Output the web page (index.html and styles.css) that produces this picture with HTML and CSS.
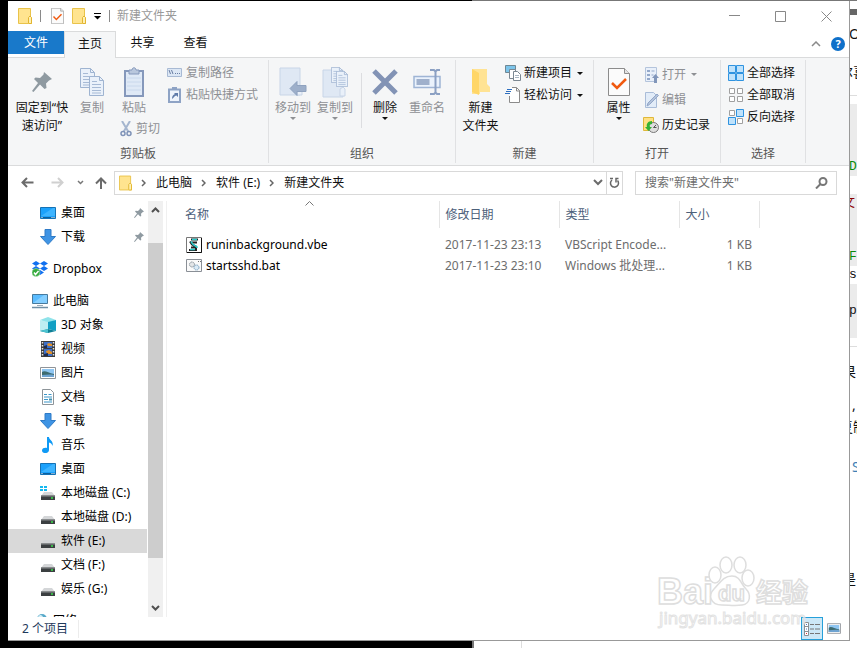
FILE: index.html
```html
<!DOCTYPE html>
<html lang="zh-CN">
<head>
  <meta charset="UTF-8" />
  <meta name="viewport" content="width=device-width, initial-scale=1.0"/>
  <title>新建文件夹</title>
  <link rel="stylesheet" href="styles.css">
</head>
<body>

  <!-- icons used more than once -->
  <svg class="sprite" aria-hidden="true">
    <symbol id="i-folder" viewBox="0 0 14 16">
      <path d="M.5.5h12v8l1 1v6h-13z" fill="#ffe48f" stroke="#e9c34a"/>
      <path d="M10.500 15V9.500l1.500-1.500 1.500 1.500V15.500h-2.500z" fill="#fff0b3" stroke="#e2b530"/>
    </symbol>
    <symbol id="i-check" viewBox="0 0 22 28">
      <path d="M.5.5h16l5 5v22H.500z" fill="#fbfbfb" stroke="#8c8c8c"/>
      <path d="M16.500.5v5h5" fill="#e4e4e4" stroke="#8c8c8c"/>
      <path d="M4 15l5 5 9-9" fill="none" stroke="#f0590f" stroke-width="2.500"/>
    </symbol>
    <symbol id="i-pin" viewBox="0 0 20 20">
      <path d="M12 0l8 7-3 1.500-3 3 .5 4.500-2 1-4.500-4.500L1.500 20 0 19l6-8L2 7l1.500-1.500 4.500.5 3.500-3.500z" fill="#8f9aa1"/>
    </symbol>
    <symbol id="i-page" viewBox="0 0 15 20">
      <path d="M.5.5h10l4 4v15H.500z" fill="#eaf1fa" stroke="#9fb4d1"/>
      <path d="M10.500.5v4h4" fill="none" stroke="#9fb4d1"/>
      <path d="M3 5.500h5M3 8.500h9M3 11.500h9M3 14.500h9M3 17h9" stroke="#a7bad5"/>
    </symbol>
    <symbol id="i-desktop" viewBox="0 0 16 12">
      <path d="M.5.5h15v11H.500z" fill="#1ba1fb" stroke="#1572b5"/>
      <path d="M1 9L13 1h2v8z" fill="#3db4ff"/>
      <path d="M1 10.500h14" stroke="#0b5f9c"/>
      <path d="M1.500 10.500h1m9 0h1m1 0h1" stroke="#fff"/>
    </symbol>
    <symbol id="i-download" viewBox="0 0 16 16">
      <path d="M5 .5h6v7h4.500L8 15.500.5 7.500H5z" fill="#3f94e4" stroke="#2f7bc7"/>
    </symbol>
    <symbol id="i-drive" viewBox="0 0 16 16">
      <path d="M4 7h8l3 4H1z" fill="#d4d6d8"/>
      <path d="M1 10.500h14V15H1z" fill="#3b3f41"/>
      <path d="M1 11h14" stroke="#8b8f91"/>
      <path d="M11 13h2" stroke="#38e04a" stroke-width="1.500"/>
    </symbol>
    <symbol id="i-picture" viewBox="0 0 16 12">
      <path d="M.5.5h15v11H.500z" fill="#fff" stroke="#8f9499"/>
      <path d="M2 2h12v8H2z" fill="#8fc6f2"/>
      <path d="M2 5c3-2 6 1 12 2v3H2z" fill="#3d6b70"/>
      <path d="M2 8c4 0 8-1 12 0v2H2z" fill="#6ea3d1"/>
    </symbol>
    <symbol id="i-down" viewBox="0 0 6 3"><path d="M0 0h6L3 3z" fill="currentColor"/></symbol>
    <symbol id="i-next" viewBox="0 0 5 8"><path d="M1 1l3 3-3 3" fill="none" stroke="#666" stroke-width="1.500"/></symbol>
  </svg>

  <div class="desktop">

    <!-- page open behind the explorer -->
    <div class="behind">
      <div class="behind-tab"></div>
      <div class="behind-text" aria-hidden="true">
        <div class="bar"></div>
        <p class="intro">O</p>
        <p class="title cut">尔喜</p>
        <hr>
        <div class="code">
          <p></p><p></p><p></p>
          <p class="green">D</p>
          <p class="white"></p>
          <p class="red cut">文</p>
          <p></p><p></p>
          <p class="green">F</p>
          <p class="white">s</p>
          <p></p>
          <p>p</p>
          <p></p>
        </div>
        <hr>
        <p class="result cut">果</p>
        <p class="comma">,</p>
        <p class="copy cut">复制</p>
        <p class="link">S</p>
        <p class="last cut">是</p>
      </div>
    </div>

    <div class="explorer">
      <header class="titlebar">
        <div class="quick">
          <svg class="folder"><use href="#i-folder"/></svg>
          <span class="sep"></span>
          <button class="props" aria-label="属性"><svg class="mini-check"><use href="#i-check"/></svg></button>
          <button aria-label="新建文件夹"><svg class="folder"><use href="#i-folder"/></svg></button>
          <button class="more" aria-label="自定义快速访问工具栏"><svg width="7" height="7" viewBox="0 0 7 7"><path d="M0 .5h7" stroke="#000"/><path d="M0 3h7L3.500 6.500z"/></svg></button>
          <span class="sep"></span>
        </div>
        <h1>新建文件夹</h1>
        <div class="controls">
          <button aria-label="最小化"><svg width="11" height="11"><path d="M0 4.500h11" stroke="#888"/></svg></button>
          <button aria-label="最大化"><svg width="11" height="11"><path d="M.5.5h10v10H.500z" fill="none" stroke="#888"/></svg></button>
          <button aria-label="关闭"><svg width="11" height="11"><path d="M.5.5l10 10M10.500.5l-10 10" stroke="#888"/></svg></button>
        </div>
      </header>

      <nav class="tabs">
        <button class="file">文件</button>
        <button class="active">主页</button>
        <button>共享</button>
        <button>查看</button>
        <div class="tab-tools">
          <button aria-label="折叠功能区"><svg width="10" height="6"><path d="M1 5l4-4 4 4" fill="none" stroke="#8a8a8a" stroke-width="1.500"/></svg></button>
          <button class="help" aria-label="帮助">?</button>
        </div>
      </nav>

      <div class="ribbon">
        <section class="group clipboard">
          <div class="tools">
            <button class="big wide">
              <span class="pic"><svg width="20" height="20"><use href="#i-pin"/></svg></span>
              固定到“快<br>速访问”
            </button>
            <button class="big narrow" disabled>
              <span class="pic"><svg width="25" height="29" viewBox="0 0 25 29"><use href="#i-page" width="15" height="20"/><use href="#i-page" x="9" y="8" width="15" height="20"/></svg></span>
              复制
            </button>
            <div class="paste">
              <button class="big" disabled>
                <span class="pic"><svg width="20" height="30" viewBox="0 0 20 30"><path d="M1 4h18v25H1z" fill="#dfe9f6" stroke="#8598bb" stroke-width="2"/><path d="M5 7V3h3c0-3 4-3 4 0h3v4z" fill="#b9c7dd" stroke="#8598bb"/><path d="M3 11h14M3 15h14M3 19h14M3 23h14" stroke="#c9d8ec"/></svg></span>
                粘贴
              </button>
              <button class="small" disabled>
                <svg width="12" height="16" viewBox="0 0 12 16"><path d="M2 0l6.500 11M10 0L3.500 11" stroke="#a5b6cf" stroke-width="2"/><circle cx="3" cy="12.500" r="2" fill="none" stroke="#7f93b8" stroke-width="1.500"/><circle cx="9" cy="12.500" r="2" fill="none" stroke="#7f93b8" stroke-width="1.500"/></svg>
                剪切
              </button>
            </div>
            <div class="stack">
              <button class="small" disabled>
                <svg width="15" height="10" viewBox="0 0 15 10"><path d="M.5.5h14v8H.500z" fill="#dce7f5" stroke="#a8bad4"/><path d="M2 2l1.500 4M4.500 2L6 6M8 5.500h1m1 0h1m1 0h1" stroke="#6a7ea3"/></svg>
                复制路径
              </button>
              <button class="small" disabled>
                <svg width="15" height="16" viewBox="0 0 15 16"><path d="M2 2.500h11v12.500H2z" fill="#eef4fc" stroke="#8ea3c5" stroke-width="2"/><path d="M5 3V0h5v3z" fill="#8ea3c5"/><path d="M5 12c0-3 1-4 3-5L7 6h4v4L9.500 8.500C7 9 7 11 5 12z" fill="#5f7ba9"/></svg>
                粘贴快捷方式
              </button>
            </div>
          </div>
          <h2>剪贴板</h2>
        </section>

        <section class="group organize">
          <div class="tools">
            <button class="big" disabled>
              <span class="pic"><svg width="28" height="30" viewBox="0 0 28 30"><path d="M1 1h20v27H1z" fill="#dfe8f4" stroke="#c8d5e7"/><path d="M18 20v8h5v-8l-2-2z" fill="#e9f0f9" stroke="#c8d5e7"/><path d="M11 21.500l7-7v4h9v6h-9v4z" fill="#9dafca" stroke="#8fa2bf"/></svg></span>
              移动到
              <svg class="down"><use href="#i-down"/></svg>
            </button>
            <button class="big" disabled>
              <span class="pic"><svg width="28" height="31" viewBox="0 0 28 31"><path d="M2 3h20v27H2z" fill="#dfe8f4" stroke="#c8d5e7"/><path d="M19 22v7h5v-7l-2-2z" fill="#e9f0f9" stroke="#c8d5e7"/><use href="#i-page" x="10" y="0" width="12" height="16"/><use href="#i-page" x="15" y="4" width="12" height="16"/></svg></span>
              复制到
              <svg class="down"><use href="#i-down"/></svg>
            </button>
            <span class="rule"></span>
            <button class="big">
              <span class="pic"><svg width="26" height="26" viewBox="0 0 26 26"><path d="M2 2l22 22M24 2L2 24" stroke="#8293b5" stroke-width="5"/></svg></span>
              删除
              <svg class="down"><use href="#i-down"/></svg>
            </button>
            <button class="big" disabled>
              <span class="pic"><svg width="28" height="28" viewBox="0 0 28 28"><path d="M1 8.500h26v11H1z" fill="#eaf2fc" stroke="#9fb5d5" stroke-width="1.500"/><path d="M3.500 11h13v6h-13z" fill="#9fb0cc"/><path d="M17 2h4l1.500 1.500L24 2h3M22.500 3v22M17 26h4l1.500-1.500L24 26h3" fill="none" stroke="#8ba0c3" stroke-width="2"/></svg></span>
              重命名
            </button>
          </div>
          <h2>组织</h2>
        </section>

        <section class="group create">
          <div class="tools">
            <button class="big">
              <span class="pic"><svg width="20" height="28" viewBox="0 0 20 28"><path d="M1 1h15v15l3 3v5H9v2H1z" fill="#ffe394"/><path d="M1 1l7 4v22l-7-3z" fill="#ffd667"/></svg></span>
              新建<br>文件夹
            </button>
            <div class="stack">
              <button class="small">
                <svg width="16" height="16" viewBox="0 0 16 16"><path d="M.5.5h10v7H.500z" fill="#7cc4ea" stroke="#6e8794"/><path d="M4.500 4.500h6v9h-6z" fill="#fff" stroke="#7b8791"/><path d="M8.500 6.500h4l3 3v6h-7z" fill="#fff" stroke="#7b8791"/><path d="M10 10.500h4M10 12.500h4" stroke="#aab7c2"/></svg>
                新建项目
                <svg class="down"><use href="#i-down"/></svg>
              </button>
              <button class="small">
                <svg width="16" height="16" viewBox="0 0 16 16"><path d="M4.500.5h7l3 3v12h-10z" fill="#fff"/><path d="M7 .5h4.500l3 3v12h-10V9M11.500.5v3.500H15" fill="none" stroke="#8b8b8b"/><path d="M2 2.500h5M1 4.500h5M0 6.500h5" stroke="#2e6fc0"/></svg>
                轻松访问
                <svg class="down"><use href="#i-down"/></svg>
              </button>
            </div>
          </div>
          <h2>新建</h2>
        </section>

        <section class="group open">
          <div class="tools">
            <button class="big">
              <span class="pic"><svg width="22" height="28"><use href="#i-check"/></svg></span>
              属性
              <svg class="down"><use href="#i-down"/></svg>
            </button>
            <div class="stack">
              <button class="small" disabled>
                <svg width="16" height="16" viewBox="0 0 16 16"><path d="M2.500.5h11v14h-11z" fill="#e9f0fa" stroke="#b4c4dc"/><path d="M4 3h3v2H4zM4 7h3v2H4zM4 11h3v2H4z" fill="#93a8ca"/><path d="M8.500 4h3M8.500 8h2" stroke="#93a8ca"/><path d="M12.500 7l3.500 4h-2v5h-3v-5H9z" fill="#8196ba"/></svg>
                打开
                <svg class="down"><use href="#i-down"/></svg>
              </button>
              <button class="small" disabled>
                <svg width="16" height="16" viewBox="0 0 16 16"><path d="M2.500.5h8l3 3v12h-11z" fill="#e2ecf8" stroke="#a9bcd8"/><path d="M4 14l1-3 9-9 1.500 1.500-9 9z" fill="#b3c3db" stroke="#93a7c8"/></svg>
                编辑
              </button>
              <button class="small">
                <svg width="16" height="16" viewBox="0 0 16 16"><path d="M.5.5h10v13H.500z" fill="#ffe084" stroke="#dfb83b"/><circle cx="10.500" cy="10.500" r="5" fill="#dedede" stroke="#777"/><path d="M10.500 10.500l2.500-2.500M10.500 10.500h3" fill="none" stroke="#555"/><path d="M9 4C5 4 3 7 4 10H2l3.500 4L9 10H7c-1-2 0-3 2-3z" fill="#33b233"/></svg>
                历史记录
              </button>
            </div>
          </div>
          <h2>打开</h2>
        </section>

        <section class="group select">
          <div class="tools">
            <div class="stack">
              <button class="small">
                <svg width="16" height="16" viewBox="0 0 16 16" fill="#bfe2fb" stroke="#2f93e0"><path d="M.5.5h7v7h-7zM8.500.5h7v7h-7zM.5 8.500h7v7h-7zM8.500 8.500h7v7h-7z"/></svg>
                全部选择
              </button>
              <button class="small">
                <svg width="16" height="16" viewBox="0 0 16 16" fill="#fff" stroke="#a0a0a0"><path d="M1.500 1.500h5v5h-5zM9.500 1.500h5v5h-5zM1.500 9.500h5v5h-5zM9.500 9.500h5v5h-5z"/></svg>
                全部取消
              </button>
              <button class="small">
                <svg width="16" height="16" viewBox="0 0 16 16"><path d="M1.500 1.500h5v5h-5zM9.500 9.500h5v5h-5z" fill="#fff" stroke="#a0a0a0"/><path d="M8.500.5h7v7h-7zM.5 8.500h7v7h-7z" fill="#bfe2fb" stroke="#2f93e0"/></svg>
                反向选择
              </button>
            </div>
          </div>
          <h2>选择</h2>
        </section>
      </div>

      <div class="address">
        <div class="history">
          <button aria-label="后退"><svg width="13" height="11"><path d="M12.500 5.500H1.500M6 1L1.500 5.500 6 10" fill="none" stroke="#6b6b6b" stroke-width="2"/></svg></button>
          <button aria-label="前进"><svg width="13" height="11"><path d="M.5 5.500h11M7 1l4.500 4.500L7 10" fill="none" stroke="#d0d0d0" stroke-width="2"/></svg></button>
          <button class="recent" aria-label="最近浏览的位置"><svg width="7" height="5"><path d="M1 1l2.500 2.500L6 1" fill="none" stroke="#777" stroke-width="1.500"/></svg></button>
          <button class="up" aria-label="上移"><svg width="12" height="12"><path d="M6 12V1.500M1 6.500l5-5 5 5" fill="none" stroke="#6b6b6b" stroke-width="2"/></svg></button>
        </div>
        <div class="path">
          <svg class="folder"><use href="#i-folder"/></svg>
          <svg class="next"><use href="#i-next"/></svg>
          <button>此电脑</button>
          <svg class="next"><use href="#i-next"/></svg>
          <button>软件 (E:)</button>
          <svg class="next"><use href="#i-next"/></svg>
          <button>新建文件夹</button>
          <button class="drop" aria-label="以前的位置"><svg width="10" height="7"><path d="M1 1l4 4 4-4" fill="none" stroke="#6b6b6b" stroke-width="2"/></svg></button>
          <button class="refresh" aria-label="刷新"><svg width="11" height="12" viewBox="0 0 11 12"><path d="M3 3a4 4 0 1 0 5.500.5M4 1.500h-3M9.500 1.500l-2.500 0v4" fill="none" stroke="#666" stroke-width="1.500"/></svg></button>
        </div>
        <form class="search">
          <input type="text" aria-label="搜索" placeholder='搜索"新建文件夹"'>
          <svg width="13" height="12" viewBox="0 0 13 12"><circle cx="8" cy="4.500" r="3.500" fill="none" stroke="#777" stroke-width="2"/><path d="M5.500 7L1 11.500" stroke="#777" stroke-width="2"/></svg>
        </form>
      </div>

      <main>
        <nav class="tree">
          <ul>
            <li><a href="#"><svg class="flat"><use href="#i-desktop"/></svg>桌面<svg class="pinned"><use href="#i-pin"/></svg></a></li>
            <li><a href="#"><svg><use href="#i-download"/></svg>下载<svg class="pinned"><use href="#i-pin"/></svg></a></li>
            <li class="root"><a href="#"><svg viewBox="0 0 16 16"><path d="M4 0l4 2.500L4 5 0 2.500zM12 0l4 2.500L12 5 8 2.500zM4 5l4 2.500L4 10 0 7.500zM12 5l4 2.500L12 10 8 7.500zM8 9l4 2.500L8 14l-4-2.500z" fill="#1070f0"/><circle cx="4" cy="11.500" r="4" fill="#35ab3d" stroke="#c2e8c4" stroke-width=".5"/><path d="M2 11.500L3.500 13.500 6.500 10" fill="none" stroke="#fff" stroke-width="1.500"/></svg>Dropbox</a></li>
            <li class="root"><a href="#"><svg viewBox="0 0 16 16"><path d="M.5 1.500h15v9H.500z" fill="#5bbcff" stroke="#487a9d"/><path d="M1 10L12 2h3v8z" fill="#86cfff"/><path d="M5 12.500h6" stroke="#9bacb8"/><path d="M0 14.500h16" stroke="#6f8fa5" stroke-width="1.500"/></svg>此电脑</a></li>
            <li><a href="#"><svg viewBox="0 0 16 16"><path d="M0 3l8-3 8 3-8 3z" fill="#8fe3ea"/><path d="M0 3l8 2v7l-8 2z" fill="#bdeef2"/><path d="M8 5l8-2v11l-8-2z" fill="#12a0c4"/><path d="M8 12l8 2-8 2-8-2z" fill="#0d7f96"/><path d="M0 14l8-2v4z" fill="#4cc4d0"/></svg>3D 对象</a></li>
            <li><a href="#"><svg viewBox="0 0 16 16"><path d="M1 0h14v16H1z" fill="#3c3c3c"/><path d="M2.500 1v14M13.500 1v14" stroke="#e8e8e8" stroke-width="1.500" stroke-dasharray="1.500 1.500"/><path d="M4 1h8v6H4zM4 8h8v7H4z" fill="#3d70c9"/><path d="M7 3l2-1 3 1v2H8zM6 10l3-1 3 2v2H7z" fill="#e0912c"/><path d="M4 5l3-1v3H4zM4 13l4-1v3H4z" fill="#1c2c52"/></svg>视频</a></li>
            <li><a href="#"><svg class="flat"><use href="#i-picture"/></svg>图片</a></li>
            <li><a href="#"><svg viewBox="0 0 16 16"><path d="M2.500.5h8l3 3v12h-11z" fill="#fff" stroke="#8d9499"/><path d="M4 5.500h3M8.500 5.500h3M4 8h8M4 10.500h4M4 13h8" stroke="#3b96c9"/><path d="M9 9.500h3v2H9z" fill="#4692b0"/></svg>文档</a></li>
            <li><a href="#"><svg><use href="#i-download"/></svg>下载</a></li>
            <li><a href="#"><svg viewBox="0 0 16 16"><path d="M7 0h2c0 3 5 4 3.500 9-.5-2-1.500-3-3.500-3.500V13c0 4-7 4-7 .5C2 11 5 10.500 7 11z" fill="#0f9af5"/></svg>音乐</a></li>
            <li><a href="#"><svg class="flat"><use href="#i-desktop"/></svg>桌面</a></li>
            <li><a href="#"><svg viewBox="0 0 16 16"><use href="#i-drive" width="16" height="16"/><path d="M0 1h3v2H0zM4 1h3v2H4zM0 4h3v2H0zM4 4h3v2H4z" fill="#15b9f0"/></svg>本地磁盘 (C:)</a></li>
            <li><a href="#"><svg><use href="#i-drive"/></svg>本地磁盘 (D:)</a></li>
            <li><a href="#" class="current"><svg><use href="#i-drive"/></svg>软件 (E:)</a></li>
            <li><a href="#"><svg><use href="#i-drive"/></svg>文档 (F:)</a></li>
            <li><a href="#"><svg><use href="#i-drive"/></svg>娱乐 (G:)</a></li>
            <li class="root"><a href="#"><svg viewBox="0 0 16 16"><circle cx="10" cy="6" r="5" fill="#58a9c9"/><path d="M6 4c2-3 4-2 5 0s-2 3-5 0z" fill="#d5eef6"/></svg>网络</a></li>
          </ul>
          <div class="scrollbar">
            <svg width="9" height="6"><path d="M1 5l3.500-3.500L8 5" fill="none" stroke="#505050" stroke-width="2"/></svg>
            <div class="thumb"></div>
            <svg width="9" height="6"><path d="M1 1l3.500 3.500L8 1" fill="none" stroke="#505050" stroke-width="2"/></svg>
          </div>
        </nav>

        <div class="files">
          <table>
            <thead>
              <tr>
                <th class="name">名称<svg class="sort" width="9" height="5"><path d="M.5 4.500l4-4 4 4" fill="none" stroke="#777"/></svg></th>
                <th class="date">修改日期</th>
                <th class="type">类型</th>
                <th class="size">大小</th>
                <th></th>
              </tr>
            </thead>
            <tbody>
              <tr>
                <td class="name"><svg width="16" height="16" viewBox="0 0 16 16"><path d="M.5.5h15v15H.500z" fill="#fff" stroke="#777"/><path d="M15.500 1v14.500H1" fill="none" stroke="#111"/><path d="M5 2.500h7M4 4.500l2 3 4 2v3M3 13h8M6 5.500h5M5 10.500h4" fill="none" stroke="#222" stroke-width="2"/><path d="M6 2.500h5M5 4.500l2 3 4 2.500v1M4 12.500h5" fill="none" stroke="#2cc9c9" stroke-width="1.500"/></svg>runinbackground.vbe</td>
                <td>2017-11-23 23:13</td>
                <td>VBScript Encode...</td>
                <td class="size">1 KB</td>
                <td></td>
              </tr>
              <tr>
                <td class="name"><svg width="16" height="16" viewBox="0 0 16 16"><path d="M.5 1.500h15v12H.500z" fill="#fafafa" stroke="#8a8f96"/><path d="M12 3.500h1m1 0h1" stroke="#777"/><circle cx="6" cy="6.500" r="2.500" fill="#e3e6e8" stroke="#8d979f" stroke-dasharray="1.500 .5"/><circle cx="10.500" cy="9.500" r="2.500" fill="#dcebf6" stroke="#7ba3c0" stroke-dasharray="1.500 .5"/></svg>startsshd.bat</td>
                <td>2017-11-23 23:10</td>
                <td>Windows 批处理...</td>
                <td class="size">1 KB</td>
                <td></td>
              </tr>
            </tbody>
          </table>
        </div>
      </main>

      <footer class="status">
        <span class="count">2 个项目</span>
        <div class="views">
          <button class="on" aria-label="详细信息"><svg width="16" height="14" viewBox="0 0 16 14"><path d="M.5.5h4v13h-4zM.5 4.500h4M.5 9.500h4" fill="#fff" stroke="#8a8f94"/><path d="M6 2.500h4m1 0h5M6 7h4m1 0h5M6 11.500h4m1 0h5" stroke="#777"/><path d="M2 2.500h1M2 7h1" stroke="#4b7cc0"/><path d="M2 11.500h1" stroke="#d33"/></svg></button>
          <button aria-label="大图标"><svg width="14" height="11"><use href="#i-picture"/></svg></button>
        </div>
      </footer>

      <svg class="watermark" width="160" height="80" viewBox="0 0 160 80" aria-hidden="true">
        <g fill="#fff" stroke="#d6d6d6" stroke-width="1.500">
          <text x="4" y="51" class="wm-logo">Bai</text>
          <ellipse cx="62" cy="22" rx="6" ry="8"/>
          <ellipse cx="73" cy="12" rx="6" ry="8"/>
          <ellipse cx="87" cy="12" rx="6" ry="8"/>
          <ellipse cx="95" cy="25" rx="6" ry="8"/>
          <path d="M79 23c8 0 9 8 14 13s5 15-4 16c-7 1-13 0-20 0-12 0-14-10-8-16s9-13 18-13z"/>
          <text x="65" y="48" class="wm-du">du</text>
          <text x="103" y="49" class="wm-cn">经验</text>
        </g>
        <text x="6" y="71" class="wm-url" fill="#fff" stroke="#dcdcdc">jingyan.baidu.com</text>
      </svg>
    </div>
  </div>

</body>
</html>
```
FILE: styles.css
```css
* {
  box-sizing: border-box;
}

body {
  margin: 0;
  font-family: "Noto Sans", "Noto Sans CJK SC", sans-serif;
  font-size: 12px;
  line-height: 18px;
  color: #111;
}

button {
  font: inherit;
  color: inherit;
  padding: 0;
  border: none;
  background: none;
}

svg {
  flex: none;
}

.sprite {
  display: none;
}

.desktop {
  position: relative;
  height: 100vh;
  min-height: 640px;
  padding: 1px 7px 7px 8px;
  background: #000;
  overflow: hidden;
}

/* page behind */
.behind {
  position: absolute;
  top: 0;
  right: 0;
  bottom: 0;
  left: 472px;
  display: flex;
  justify-content: flex-end;
  background: #fff;
  border-top: 1px solid #777;
  border-left: 2px solid #777;
}

.behind-tab {
  width: 48px;
  margin-right: auto;
  border-right: 1px solid #ddd;
}

.behind-text {
  width: 8px;
  overflow: hidden;
  font-size: 14px;
  white-space: nowrap;
}

.behind-text p {
  height: 18px;
  margin: 0;
}

.behind-text hr {
  height: 1px;
  margin: 8px 0 16px;
  border: none;
  background: #ddd;
}

.behind-text .bar {
  height: 6px;
  margin: 8px 0 10px;
  background: #666;
}

.behind-text .cut {
  text-indent: -7px;
}

.behind-text .title {
  margin: 20px 0 14px;
  text-indent: -10px;
}

.behind-text .title + hr {
  margin: 0 0 8px;
}

.code {
  background: #ebebeb;
  font-family: "Liberation Mono", "Noto Sans CJK SC", monospace;
  font-size: 13px;
}

.code .white { background: #fff; }
.code .green { color: #0a8a0a; }
.code .red { color: #8b0000; }

.behind-text .comma { margin-top: 15px; text-indent: 3px; }
.behind-text .copy { margin-top: 4px; text-indent: -10px; }
.behind-text .link { margin-top: 22px; text-indent: 3px; color: #3f7fb5; }
.behind-text .last { margin-top: 94px; }

/* window */
.explorer {
  position: relative;
  display: flex;
  flex-direction: column;
  height: 100%;
  background: #fff;
  border-right: 1px solid #999;
  border-bottom: 1px solid #999;
}

.titlebar {
  display: flex;
  align-items: center;
  height: 30px;
}

.quick {
  display: flex;
  align-items: center;
  gap: 8px;
  padding-left: 10px;
}

.quick .props {
  margin-left: 2px;
}

.quick button,
.history button,
.controls button {
  display: flex;
  align-items: center;
  justify-content: center;
}

.folder {
  width: 14px;
  height: 16px;
}

.mini-check {
  width: 13px;
  height: 16px;
}

.sep {
  width: 1px;
  height: 12px;
  background: #8a8a8a;
}

.titlebar h1 {
  margin: 0 0 0 7px;
  font-size: 12px;
  font-weight: normal;
  color: #999;
}

.controls {
  display: flex;
  margin-left: auto;
}

.controls button {
  width: 46px;
  height: 28px;
}

/* tabs */
.tabs {
  display: flex;
  align-items: flex-start;
  height: 27px;
  border-bottom: 1px solid #dadbdc;
}

.tabs > button {
  width: 53px;
  height: 24px;
}

.tabs .file {
  width: 56px;
  height: 23px;
  background: #1979ca;
  color: #fff;
}

.tabs .active {
  width: 52px;
  height: 27px;
  padding-bottom: 3px;
  background: #f5f6f7;
  border: 1px solid #dadbdc;
  border-bottom: none;
}

.tab-tools {
  display: flex;
  align-items: center;
  gap: 10px;
  margin-left: auto;
  padding: 6px 4px 0 0;
}

.tab-tools button {
  display: flex;
}

.tab-tools .help {
  width: 14px;
  height: 14px;
  justify-content: center;
  border-radius: 50%;
  background: #0f70c9;
  color: #fff;
  font-size: 11px;
  font-weight: bold;
  line-height: 14px;
}

/* ribbon */
.ribbon {
  display: flex;
  height: 108px;
  padding: 2px 0;
  background: #f5f6f7;
  border-bottom: 1px solid #dadbdc;
}

.group {
  display: flex;
  flex-direction: column;
  border-right: 1px solid #e0e1e3;
}

.group h2 {
  margin: auto 0 0;
  font-size: 12px;
  font-weight: normal;
  text-align: center;
  color: #555;
}

.tools {
  display: flex;
  padding: 2px 10px 0 3px;
}

.organize .tools {
  padding-right: 7px;
}

.create .tools,
.open .tools {
  padding-left: 2px;
}

.select .tools {
  padding-left: 7px;
}

.group button:disabled {
  color: #8e9094;
}

.big {
  display: flex;
  flex-direction: column;
  align-items: center;
  width: 42px;
  padding-top: 3px;
  white-space: nowrap;
}

.big.wide {
  width: 62px;
}

.big.narrow {
  width: 38px;
}

.create .big,
.open .big {
  width: 45px;
  margin-right: 2px;
}

.pic {
  display: flex;
  align-items: center;
  justify-content: center;
  height: 34px;
}

.down {
  width: 6px;
  height: 3px;
}

.small {
  display: flex;
  align-items: center;
  gap: 3px;
  height: 22px;
  white-space: nowrap;
}

.clipboard .small {
  gap: 4px;
}

.small .down {
  margin-left: 2px;
}

.open .small {
  height: 25px;
}

.paste {
  margin: 0 7px 0 9px;
}

.paste .big {
  width: 28px;
}

.clipboard .paste .small {
  height: 24px;
}

.rule {
  width: 1px;
  height: 55px;
  margin: 11px 2px 0 5px;
  background: #dcdde0;
}

/* address bar */
.address {
  display: flex;
  align-items: center;
  height: 35px;
  padding: 0 12px 2px 0;
}

.history {
  display: flex;
  align-items: center;
  gap: 14px;
  padding: 0 7px 0 13px;
}

.history button + button {
  margin-left: 3px;
}

.history .recent {
  margin-left: -1px;
}

.history .up {
  margin-left: -3px;
}

.path {
  display: flex;
  flex: 1;
  align-items: center;
  height: 24px;
  padding-left: 4px;
  border: 1px solid #d9d9d9;
}

.path .folder {
  width: 13px;
}

.next {
  width: 5px;
  height: 8px;
  margin: 0 10px 0 9px;
}

.drop {
  display: flex;
  margin: 0 3px 0 auto;
}

.refresh {
  display: flex;
  align-items: center;
  padding: 0 2px;
  height: 22px;
  border-left: 1px solid #d9d9d9;
}

.search {
  display: flex;
  align-items: center;
  width: 202px;
  height: 24px;
  margin-left: 12px;
  padding: 0 8px;
  border: 1px solid #d9d9d9;
}

.search input {
  flex: 1;
  min-width: 0;
  padding: 0 1px;
  border: none;
  outline: none;
  font: inherit;
}

.search input::placeholder {
  color: #6d6d6d;
}

/* folder tree */
main {
  display: flex;
  flex: 1;
  min-height: 0;
}

.tree {
  display: flex;
  width: 159px;
  padding-right: 3px;
  border-right: 1px solid #f0f0f0;
}

.tree ul {
  flex: 1;
  margin: 0;
  padding: 0;
  list-style: none;
  overflow: hidden;
}

.tree a {
  display: flex;
  align-items: center;
  gap: 5px;
  height: 24px;
  margin-right: 1px;
  padding-left: 32px;
  color: #000;
  text-decoration: none;
}

.tree a svg {
  width: 16px;
  height: 16px;
}

.tree a .flat {
  height: 12px;
}

.tree a .pinned {
  width: 10px;
  height: 10px;
  margin: 0 3px 0 auto;
}

.tree .root {
  margin-top: 8px;
}

.tree .root a {
  padding-left: 24px;
}

.tree .current {
  background: #d9d9d9;
}

.scrollbar {
  display: flex;
  flex-direction: column;
  align-items: center;
  width: 15px;
  padding: 6px 0;
  background: #f0f0f0;
}

.thumb {
  width: 100%;
  height: 78%;
  margin: 30px 0 auto;
  background: #cdcdcd;
}

/* file list */
.files {
  flex: 1;
}

table {
  width: 100%;
  table-layout: fixed;
  border-collapse: collapse;
}

th {
  position: relative;
  height: 27px;
  padding: 0 6px;
  border-right: 1px solid #e5e5e5;
  font-weight: normal;
  text-align: left;
  color: #4c607a;
}

th:last-child {
  border: none;
}

th.name {
  width: 272px;
  padding-left: 18px;
}

th.date,
th.type {
  width: 120px;
}

th.size {
  width: 80px;
}

.sort {
  position: absolute;
  top: 0;
  left: 51%;
}

tbody::before {
  content: "";
  display: block;
  height: 6px;
}

td {
  height: 21px;
  padding: 0 6px;
  color: #6d6d6d;
  white-space: nowrap;
}

td.name {
  padding-left: 19px;
  color: #000;
}

td.name svg {
  margin-right: 4px;
  vertical-align: middle;
}

td.size {
  padding-right: 7px;
  text-align: right;
}

/* status bar */
.status {
  display: flex;
  align-items: center;
  height: 23px;
  padding: 0 4px 0 14px;
  color: #1e395b;
}

.count {
  padding-right: 10px;
  border-right: 1px solid #ececec;
}

.views {
  display: flex;
  margin-left: auto;
}

.views button {
  display: flex;
  align-items: center;
  justify-content: center;
  width: 22px;
  height: 23px;
}

.views .on {
  background: #cce8f7;
  border: 1px solid #26a0da;
}

.watermark {
  position: absolute;
  right: 36px;
  bottom: 7px;
  opacity: 0.8;
  pointer-events: none;
}

.wm-logo {
  font: bold 36px "Liberation Sans", sans-serif;
}

.wm-du {
  font: bold 22px "Liberation Sans", sans-serif;
}

.wm-cn {
  font: bold 26px "Noto Sans CJK SC", sans-serif;
}

.wm-url {
  font: 17px "Noto Sans", sans-serif;
}
```
